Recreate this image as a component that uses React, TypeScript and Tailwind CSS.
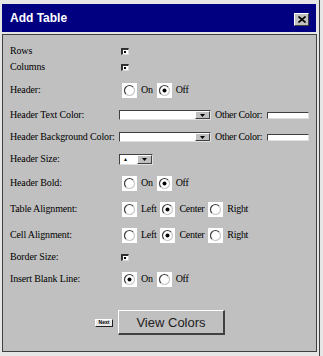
import React from 'react';

const Label = ({ children }: { children: React.ReactNode }) => (
    <div className="w-[110px] shrink-0 whitespace-nowrap">{children}</div>
);

const Check = () => (
    <span className="ml-[1px] inline-flex items-center w-[8px] h-[7px] bg-white border-t-2 border-l-2 border-t-[#303030] border-l-[#303030] border-r border-b border-r-[#d8d8d8] border-b-[#d8d8d8] pl-[1px]">
        <span className="w-[2px] h-[2px] bg-black" />
    </span>
);

const Radio = ({ checked }: { checked?: boolean }) => (
    <svg width="15" height="15" viewBox="0 0 15 15" className="shrink-0">
        <rect width="15" height="15" fill="#ffffff" />
        <path d="M3.96 11.04 A5 5 0 0 1 11.04 3.96" stroke="#404040" strokeWidth="1.2" fill="none" />
        <path d="M11.04 3.96 A5 5 0 0 1 3.96 11.04" stroke="#c8c8c8" strokeWidth="1.2" fill="none" />
        {checked && <circle cx="7.5" cy="7.5" r="2" fill="#000" />}
    </svg>
);

const RadioGroup = ({ options, selected }: { options: string[]; selected: number }) => (
    <div className="flex items-center ml-[2px]">
        {options.map((opt, i) => (
            <div key={opt} className="flex items-center">
                <Radio checked={i === selected} />
                <span className="ml-[4px] mr-[4px] tracking-[-0.3px]">{opt}</span>
            </div>
        ))}
    </div>
);

const Arrow = () => (
    <svg width="5" height="3" viewBox="0 0 5 3">
        <path d="M0 0 H5 L2.5 3 Z" fill="#000" />
    </svg>
);

const Select = ({ width, height, value }: { width: string; height: string; value?: string }) => (
    <div className={`${width} ${height} -ml-[1px] shrink-0 bg-white border border-t-[#404040] border-l-[#404040] border-r-[#e0e0e0] border-b-[#e0e0e0] flex items-center justify-between`}>
        <span className="pl-[3px] text-[5px] leading-none">{value}</span>
        <div className="w-[15px] h-full bg-[#c0c0c0] border border-t-white border-l-white border-r-[#404040] border-b-[#404040] flex items-center justify-center">
            <Arrow />
        </div>
    </div>
);

const ColorRow = ({ label }: { label: string }) => (
    <>
        <Label>{label}</Label>
        <Select width="w-[92px]" height="h-[10px]" />
        <span className="ml-[4px] w-[48px] shrink-0 whitespace-nowrap tracking-[-0.3px]">Other Color:</span>
        <div className="ml-[4px] w-[42px] h-[7px] shrink-0 bg-white border border-t-[#404040] border-l-[#404040] border-r-[#e0e0e0] border-b-[#e0e0e0]" />
    </>
);

export default function App() {
    return (
        <div className="w-[323px] h-[356px] bg-[#e6e6e6] overflow-hidden">
            <div className="w-[320px] h-[356px] border-r border-[#404040] pt-[4px] pl-[2px] pr-[2px] flex flex-col">
                {/* Title bar */}
                <div className="w-[314px] h-[28px] bg-[#000080] flex items-center justify-between pl-[8px] pr-[7px]">
                    <span className="text-white text-[12px] font-bold font-['Liberation_Sans',sans-serif]">Add Table</span>
                    <div className="w-[15px] h-[13px] mt-[2px] bg-[#c0c0c0] border border-t-white border-l-white border-r-[#404040] border-b-[#404040] flex items-center justify-center">
                        <svg width="8" height="7" viewBox="0 0 8 7">
                            <path d="M0.5 0.5 L7.5 6.5 M7.5 0.5 L0.5 6.5" stroke="#000" strokeWidth="1.6" />
                        </svg>
                    </div>
                </div>

                {/* Body */}
                <div className="mt-[2px] h-[318px] bg-[#c0c0c0] border border-[#404040] pt-[8px] pl-[7px] flex flex-col text-[10px] leading-none tracking-[-0.15px] text-black font-['Liberation_Serif',serif]">
                    <div className="h-[16px] flex items-center">
                        <Label>Rows</Label>
                        <Check />
                    </div>
                    <div className="h-[16px] flex items-center">
                        <Label>Columns</Label>
                        <Check />
                    </div>
                    <div className="h-[30px] flex items-center">
                        <Label>Header:</Label>
                        <RadioGroup options={['On', 'Off']} selected={1} />
                    </div>
                    <div className="h-[20px] flex items-center">
                        <ColorRow label="Header Text Color:" />
                    </div>
                    <div className="h-[24px] flex items-center">
                        <ColorRow label="Header Background Color:" />
                    </div>
                    <div className="h-[20px] flex items-center">
                        <Label>Header Size:</Label>
                        <Select width="w-[34px]" height="h-[11px]" value="▲" />
                    </div>
                    <div className="h-[28px] flex items-center">
                        <Label>Header Bold:</Label>
                        <RadioGroup options={['On', 'Off']} selected={1} />
                    </div>
                    <div className="h-[24px] flex items-center">
                        <Label>Table Alignment:</Label>
                        <RadioGroup options={['Left', 'Center', 'Right']} selected={1} />
                    </div>
                    <div className="h-[28px] flex items-center">
                        <Label>Cell Alignment:</Label>
                        <RadioGroup options={['Left', 'Center', 'Right']} selected={1} />
                    </div>
                    <div className="h-[16px] flex items-center">
                        <Label>Border Size:</Label>
                        <Check />
                    </div>
                    <div className="h-[28px] flex items-center">
                        <Label>Insert Blank Line:</Label>
                        <RadioGroup options={['On', 'Off']} selected={0} />
                    </div>

                    {/* Buttons */}
                    <div className="mt-[17px] pl-[85px] flex items-center">
                        <div className="w-[18px] h-[8px] bg-[#e8e8e8] border border-t-white border-l-white border-r-[#202020] border-b-[#202020] flex items-center justify-center text-[5px] font-bold tracking-normal font-['Liberation_Sans',sans-serif]">
                            Next
                        </div>
                        <button className="ml-[5px] w-[107px] h-[25px] bg-[#c0c0c0] border-t border-l border-t-white border-l-white border-r-2 border-b-2 border-r-[#404040] border-b-[#404040] text-[13px] tracking-normal text-[#202020] font-['Liberation_Sans',sans-serif]">
                            View Colors
                        </button>
                    </div>
                </div>
            </div>
        </div>
    );
}
